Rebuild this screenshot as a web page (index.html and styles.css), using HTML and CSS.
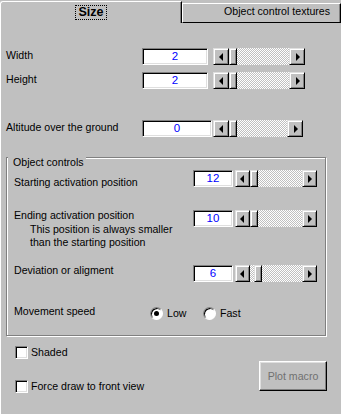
FILE: index.html
```html
<!DOCTYPE html>
<html lang="en">
<head>
    <meta charset="UTF-8">
    <title>Size</title>
    <link rel="stylesheet" href="styles.css">
</head>
<body>
<div class="dialog">
    <div class="tabs">
        <div class="tab tab-active"><span class="tab-focus">Size</span></div>
        <div class="tab tab-back">Object control textures</div>
    </div>

    <div class="page">
        <div class="field field-width">
            <div class="label">Width</div>
            <div class="edit">2</div>
            <div class="scroll">
                <div class="sbtn"><i class="arrow-left"></i></div>
                <div class="track"><div class="thumb"></div></div>
                <div class="sbtn"><i class="arrow-right"></i></div>
            </div>
        </div>

        <div class="field field-height">
            <div class="label">Height</div>
            <div class="edit">2</div>
            <div class="scroll">
                <div class="sbtn"><i class="arrow-left"></i></div>
                <div class="track"><div class="thumb"></div></div>
                <div class="sbtn"><i class="arrow-right"></i></div>
            </div>
        </div>

        <div class="field field-altitude">
            <div class="label">Altitude over the ground</div>
            <div class="edit edit-wide">0</div>
            <div class="scroll scroll-narrow">
                <div class="sbtn"><i class="arrow-left"></i></div>
                <div class="track"><div class="thumb"></div></div>
                <div class="sbtn"><i class="arrow-right"></i></div>
            </div>
        </div>

        <div class="group">
            <span class="group-title">Object controls</span>

            <div class="field field-start">
                <div class="label label-wide label-low">Starting activation position</div>
                <div class="edit edit-small">12</div>
                <div class="scroll scroll-small">
                    <div class="sbtn"><i class="arrow-left"></i></div>
                    <div class="track"><div class="thumb"></div></div>
                    <div class="sbtn"><i class="arrow-right"></i></div>
                </div>
            </div>

            <div class="field field-end">
                <div class="label-wide">
                    <div class="label">Ending activation position</div>
                    <div class="note">This position is always smaller<br>than the starting position</div>
                </div>
                <div class="controls">
                    <div class="edit edit-small">10</div>
                    <div class="scroll scroll-small">
                        <div class="sbtn"><i class="arrow-left"></i></div>
                        <div class="track"><div class="thumb"></div></div>
                        <div class="sbtn"><i class="arrow-right"></i></div>
                    </div>
                </div>
            </div>

            <div class="field field-dev">
                <div class="label label-wide">Deviation or aligment</div>
                <div class="controls">
                    <div class="edit edit-small">6</div>
                    <div class="scroll scroll-small">
                        <div class="sbtn"><i class="arrow-left"></i></div>
                        <div class="track"><div class="thumb thumb-moved"></div></div>
                        <div class="sbtn"><i class="arrow-right"></i></div>
                    </div>
                </div>
            </div>

            <div class="field field-speed">
                <div class="label">Movement speed</div>
                <div class="radio"><span class="radio-dot radio-on"></span>Low</div>
                <div class="radio"><span class="radio-dot"></span>Fast</div>
            </div>
        </div>

        <div class="bottom">
            <div class="checks">
                <div class="check"><span class="box"></span>Shaded</div>
                <div class="check check-second"><span class="box"></span>Force draw to front view</div>
            </div>
            <div class="plot">Plot macro</div>
        </div>
    </div>
</div>
</body>
</html>
```

FILE: styles.css
```css
html, body {
    margin: 0;
    overflow: hidden;
    font-family: "Liberation Sans", Arial, sans-serif;
    font-size: 10.6px;
    color: #000;
    background: #c0c0c0;
}

.dialog {
    width: 341px;
    height: 414px;
    overflow: hidden;
}

/* tab strip */

.tabs {
    display: flex;
    height: 23px;
}

.tab {
    box-sizing: border-box;
    background: #c0c0c0;
}

.tab-active {
    width: 182px;
    height: 22px;
    margin-top: 1px;
    padding-top: 3px;
    text-align: center;
    border-top: 1px solid #fff;
    border-left: 1px solid #fff;
    border-right: 1px solid #000;
    border-top-left-radius: 3px;
    box-shadow: inset -1px 0 #808080;
}

.tab-focus {
    display: inline-block;
    padding: 0 2px;
    border: 1px dotted #000;
    font-size: 12.5px;
    font-weight: bold;
    line-height: 13px;
}

.tab-back {
    flex: 1;
    height: 20px;
    margin-top: 3px;
    padding-left: 41px;
    line-height: 15px;
    border-top: 1px solid #fff;
    border-left: 1px solid #fff;
    border-right: 1px solid #000;
    border-bottom: 1px solid #000;
    box-shadow: inset -1px 0 #808080;
}

/* page */

.page {
    box-sizing: border-box;
    height: 391px;
    padding: 0 14px 0 5px;
    border-left: 1px solid #fff;
    overflow: hidden;
}

.field {
    display: flex;
    align-items: flex-start;
}

.field-width { margin-top: 25px; }
.field-height { margin-top: 7px; }
.field-altitude { margin-top: 31px; }

.label {
    flex: none;
    width: 136px;
    line-height: 15px;
    white-space: nowrap;
}

.label-wide {
    flex: none;
    width: 179px;
}

.label-low { margin-top: 5px; }

.note {
    padding-left: 16px;
    line-height: 13px;
}

.controls {
    display: flex;
    margin-top: 2px;
}

/* edit box */

.edit {
    box-sizing: border-box;
    flex: none;
    width: 66px;
    height: 17px;
    background: #fff;
    color: #0000ff;
    font-size: 11.5px;
    line-height: 15px;
    text-align: center;
    border: 1px solid;
    border-color: #808080 #fff #fff #808080;
    box-shadow: inset 1px 1px #000, inset -1px -1px #dfdfdf;
}

.edit-wide { width: 70px; }
.edit-small { width: 40px; }

/* scroll bar */

.scroll {
    display: flex;
    flex: none;
    width: 92px;
    height: 17px;
    margin-left: 5px;
}

.scroll-narrow {
    width: 90px;
    margin-left: 1px;
}

.scroll-small {
    width: 82px;
    margin-left: 2px;
}

.sbtn, .thumb {
    box-sizing: border-box;
    background: #c0c0c0;
    border: 1px solid;
    border-color: #dfdfdf #000 #000 #dfdfdf;
    box-shadow: inset 1px 1px #fff, inset -1px -1px #808080;
}

.sbtn {
    display: flex;
    align-items: center;
    justify-content: center;
    flex: none;
    width: 16px;
}

.scroll-small .sbtn { width: 15px; }

.arrow-left, .arrow-right {
    width: 0;
    height: 0;
    border-style: solid;
    border-color: transparent;
}

.arrow-left {
    border-width: 4px 4px 4px 0;
    border-right-color: #000;
    margin-right: 1px;
}

.arrow-right {
    border-width: 4px 0 4px 4px;
    border-left-color: #000;
    margin-left: 1px;
}

.track {
    flex: 1;
    display: flex;
    background-image: repeating-conic-gradient(#fff 0 25%, #c0c0c0 0 50%);
    background-size: 2px 2px;
}

.thumb {
    width: 8px;
}

.thumb-moved { margin-left: 4px; }

/* group box */

.group {
    position: relative;
    box-sizing: border-box;
    width: 320px;
    margin-top: 20px;
    padding: 0 0 14px 7px;
    border: 1px solid #808080;
    box-shadow: inset 1px 1px #fff, 1px 1px #fff;
}

.group-title {
    position: absolute;
    top: -3px;
    left: 1px;
    padding: 0 2px 0 5px;
    line-height: 15px;
    background: #c0c0c0;
}

.field-start { margin-top: 12px; }
.field-end { margin-top: 18px; }
.field-dev { margin-top: 14px; }
.field-speed { margin-top: 22px; }

.radio {
    display: flex;
    align-items: center;
    width: 53px;
    height: 15px;
    margin-top: 2px;
    line-height: 15px;
}

.radio-dot {
    box-sizing: border-box;
    display: flex;
    align-items: center;
    justify-content: center;
    width: 13px;
    height: 13px;
    margin-right: 4px;
    border-radius: 50%;
    background: #fff;
    border: 1px solid;
    border-color: #808080 #fff #fff #808080;
    box-shadow: inset 1px 1px #000;
}

.radio-on::after {
    content: "";
    width: 5px;
    height: 5px;
    border-radius: 50%;
    background: #000;
}

/* bottom */

.bottom {
    display: flex;
    justify-content: space-between;
    margin-top: 9px;
}

.checks {
    margin-left: 9px;
}

.check {
    display: flex;
    align-items: center;
    height: 15px;
    line-height: 15px;
}

.check-second { margin-top: 19px; }

.box {
    box-sizing: border-box;
    width: 13px;
    height: 13px;
    margin-right: 3px;
    background: #fff;
    border: 1px solid;
    border-color: #808080 #fff #fff #808080;
    box-shadow: inset 1px 1px #000, inset -1px -1px #dfdfdf;
}

.plot {
    box-sizing: border-box;
    display: flex;
    align-items: center;
    justify-content: center;
    width: 68px;
    height: 30px;
    margin-top: 16px;
    color: #707070;
    border: 1px solid;
    border-color: #fff #000 #000 #fff;
    box-shadow: inset -1px -1px #808080, inset 1px 1px #dfdfdf;
}
```
